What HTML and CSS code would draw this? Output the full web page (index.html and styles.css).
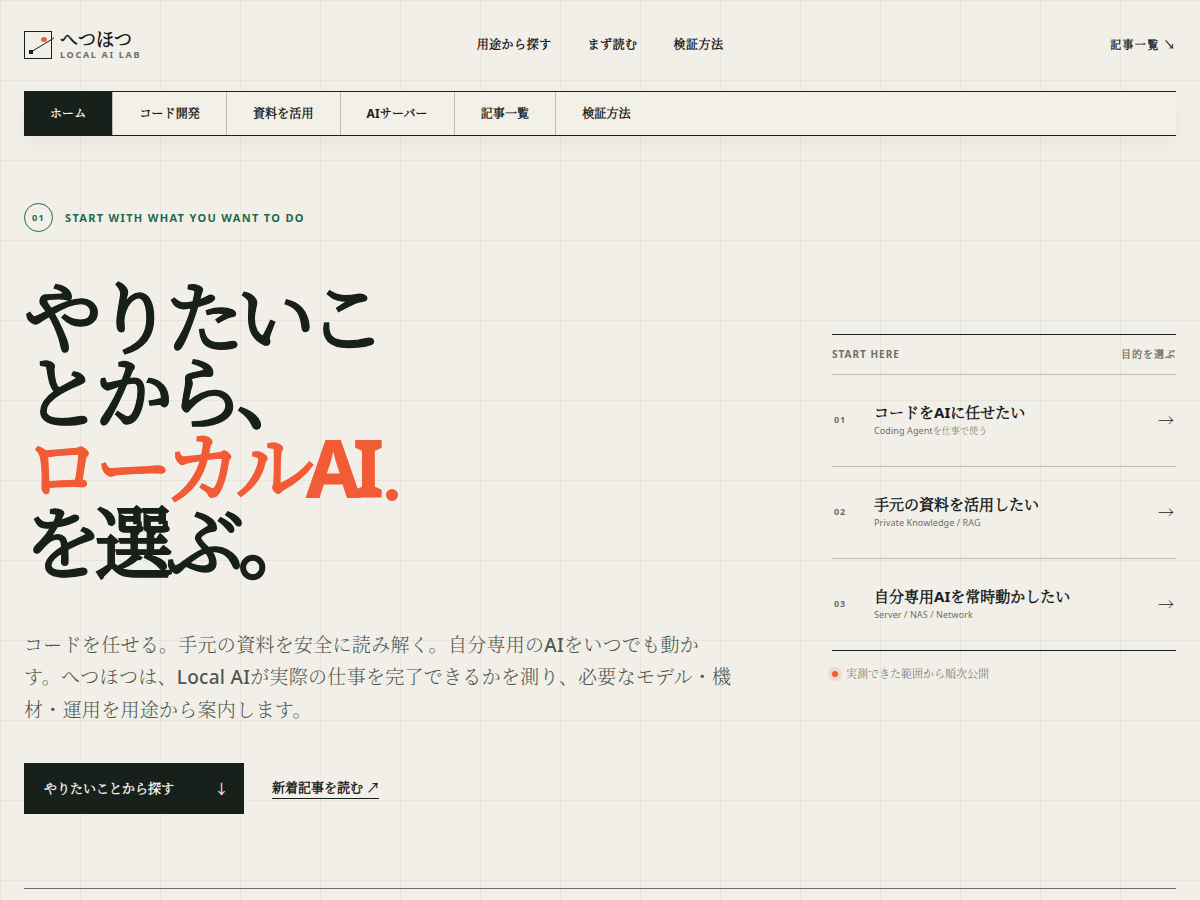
FILE: index.html
```html
<!DOCTYPE html>
<html lang="ja">
<head>
  <meta charset="UTF-8">
  <meta name="viewport" content="width=device-width, initial-scale=1.0">
  <title>へつほつ | LOCAL AI LAB</title>
  <link rel="stylesheet" href="styles.css">
</head>
<body>
  <header class="site-header">
    <a class="brand" href="#">
      <svg class="brand-mark" width="32" height="28" viewBox="0 0 32 28" aria-hidden="true">
        <rect x="0.5" y="0.5" width="27" height="27" fill="none" stroke="#17201b"/>
        <path d="M7 21 L30 7" stroke="#17201b" stroke-width="1" fill="none"/>
        <rect x="5" y="19" width="4" height="4" fill="#17201b"/>
        <ellipse cx="20" cy="8.5" rx="3" ry="2.5" fill="#f15b35"/>
      </svg>
      <span class="brand-text">
        <strong>へつほつ</strong>
        <small>LOCAL AI LAB</small>
      </span>
    </a>
    <nav class="top-nav" aria-label="メイン">
      <a href="#start">用途から探す</a>
      <a href="#read">まず読む</a>
      <a href="#method">検証方法</a>
    </nav>
    <a class="all-posts" href="#posts">記事一覧 <span>↘</span></a>
  </header>

  <nav class="tabs" aria-label="カテゴリ">
    <a class="active" href="#">ホーム</a>
    <a href="#code">コード開発</a>
    <a href="#docs">資料を活用</a>
    <a href="#server">AIサーバー</a>
    <a href="#posts">記事一覧</a>
    <a href="#method">検証方法</a>
  </nav>

  <main class="hero">
    <section class="hero-copy">
      <p class="eyebrow"><span>01</span>START WITH WHAT YOU WANT TO DO</p>
      <h1>やりたいことから、<em>ローカルAI<i></i></em>を選ぶ。</h1>
      <p class="lead">コードを任せる。手元の資料を安全に読み解く。自分専用のAIをいつでも動かす。へつほつは、Local AIが実際の仕事を完了できるかを測り、必要なモデル・機材・運用を用途から案内します。</p>
      <div class="actions">
        <a class="primary" href="#start">やりたいことから探す <span>↓</span></a>
        <a class="text-link" href="#posts">新着記事を読む ↗</a>
      </div>
    </section>

    <aside class="start" id="start">
      <div class="start-head"><span>START HERE</span><span>目的を選ぶ</span></div>
      <a class="start-row" href="#code">
        <span class="num">01</span>
        <span class="label"><strong>コードをAIに任せたい</strong><small>Coding Agentを仕事で使う</small></span>
        <span class="arrow">→</span>
      </a>
      <a class="start-row" href="#docs">
        <span class="num">02</span>
        <span class="label"><strong>手元の資料を活用したい</strong><small>Private Knowledge / RAG</small></span>
        <span class="arrow">→</span>
      </a>
      <a class="start-row" href="#server">
        <span class="num">03</span>
        <span class="label"><strong>自分専用AIを常時動かしたい</strong><small>Server / NAS / Network</small></span>
        <span class="arrow">→</span>
      </a>
      <p class="status"><i></i>実測できた範囲から順次公開</p>
    </aside>
  </main>
</body>
</html>
```
FILE: styles.css
```css
:root {
  --ink: #17201b;
  --paper: #f2efe8;
  --muted: #697069;
  --line: #bdbdb5;
  --orange: #f15b35;
  --green: #1d6b4b;
}

* {
  box-sizing: border-box;
}

body {
  margin: 0;
  padding: 0 24px;
  color: var(--ink);
  background-color: var(--paper);
  background-image:
    linear-gradient(rgba(23, 32, 27, .05) 1px, transparent 1px),
    linear-gradient(90deg, rgba(23, 32, 27, .05) 1px, transparent 1px);
  background-size: 80px 80px;
  font-family: "Noto Sans", "Noto Serif CJK JP Light", "Noto Serif CJK JP", "Noto Sans CJK JP", sans-serif;
  line-height: 1.6;
}

a {
  color: inherit;
  text-decoration: none;
}

p, h1 {
  margin: 0;
}

/* header */
.site-header {
  display: grid;
  grid-template-columns: 1fr auto 1fr;
  align-items: center;
  height: 91px;
  padding-bottom: 2px;
}

.brand {
  display: flex;
  align-items: center;
  gap: 4px;
}

.brand-mark {
  overflow: visible;
}

.brand-text {
  display: grid;
}

.brand-text strong {
  font-size: 18px;
  line-height: 19px;
}

.brand-text small {
  color: var(--muted);
  font-size: 9px;
  font-weight: 700;
  line-height: 11px;
  letter-spacing: .19em;
}

.top-nav {
  display: flex;
  gap: 36px;
  font-size: 12px;
  font-weight: 700;
  letter-spacing: .04em;
}

.all-posts {
  justify-self: end;
  font-size: 11px;
  font-weight: 700;
  letter-spacing: .12em;
}

/* category tabs */
.tabs {
  display: flex;
  height: 45px;
  border-top: 1px solid var(--ink);
  border-bottom: 1px solid var(--ink);
  background: rgba(242, 240, 232, .94);
  box-shadow: 0 8px 18px rgba(23, 32, 27, .04);
  font-size: 12px;
  font-weight: 700;
  letter-spacing: .01em;
}

.tabs a {
  display: flex;
  align-items: center;
  padding: 0 26px;
  border-right: 1px solid var(--line);
}

.tabs a:last-child {
  border-right: 0;
}

.tabs .active {
  color: var(--paper);
  background: var(--ink);
}

/* hero */
.hero {
  display: grid;
  grid-template-columns: 1fr 344px;
  gap: 60px;
  align-items: center;
  padding: 67px 0 74px;
  border-bottom: 1px solid var(--muted);
}

.eyebrow {
  display: flex;
  align-items: center;
  gap: 12px;
  color: var(--green);
  font-size: 11px;
  font-weight: 700;
  line-height: 16px;
  letter-spacing: .12em;
}

.eyebrow span {
  display: grid;
  place-items: center;
  width: 29px;
  height: 29px;
  border: 1px solid var(--green);
  border-radius: 50%;
  font-size: 9px;
}

h1 {
  max-width: 400px;
  margin-top: 48px;
  font-size: 78px;
  font-weight: 700;
  line-height: 75px;
  letter-spacing: -.09em;
  -webkit-text-stroke: 1px;
}

h1 em {
  display: block;
  color: var(--orange);
  font-style: normal;
}

h1 em i {
  display: inline-block;
  width: 12px;
  height: 12px;
  margin-left: 9px;
  border-radius: 50%;
  background: var(--orange);
  vertical-align: -4px;
}

.lead {
  max-width: 710px;
  margin-top: 49px;
  color: #4e5850;
  font-size: 19px;
  font-weight: 500;
  line-height: 1.7;
  letter-spacing: .015em;
}

.actions {
  display: flex;
  align-items: center;
  gap: 28px;
  margin-top: 37px;
  font-size: 13px;
  font-weight: 700;
}

.primary {
  display: flex;
  align-items: center;
  justify-content: space-between;
  width: 220px;
  height: 51px;
  padding: 0 16px 0 20px;
  color: var(--paper);
  background: var(--ink);
}

.text-link {
  border-bottom: 1px solid var(--ink);
}

/* start here */
.start-head {
  display: flex;
  align-items: center;
  justify-content: space-between;
  height: 41px;
  border-top: 1px solid var(--ink);
  border-bottom: 1px solid var(--line);
  color: var(--muted);
  font-size: 10px;
  font-weight: 700;
  line-height: 15px;
  letter-spacing: .1em;
}

.start-row {
  display: grid;
  grid-template-columns: 40px 1fr auto;
  align-items: center;
  height: 92px;
  padding: 0 2px;
  border-bottom: 1px solid var(--line);
}

.start-row:last-of-type {
  border-bottom-color: var(--ink);
}

.num {
  color: var(--muted);
  font-size: 9px;
  font-weight: 700;
  line-height: 12px;
  letter-spacing: .1em;
}

.label {
  display: grid;
}

.label strong {
  font-size: 15px;
  line-height: 21px;
}

.label small {
  color: var(--muted);
  font-size: 9px;
  line-height: 15px;
  letter-spacing: .01em;
}

.arrow {
  font-size: 16px;
}

.status {
  display: flex;
  align-items: center;
  gap: 8px;
  margin-top: 14px;
  color: var(--muted);
  font-size: 11px;
  line-height: 18px;
}

.status i {
  width: 6px;
  height: 6px;
  border-radius: 50%;
  background: var(--orange);
  box-shadow: 0 0 0 4px rgba(241, 91, 53, .15);
}
```
